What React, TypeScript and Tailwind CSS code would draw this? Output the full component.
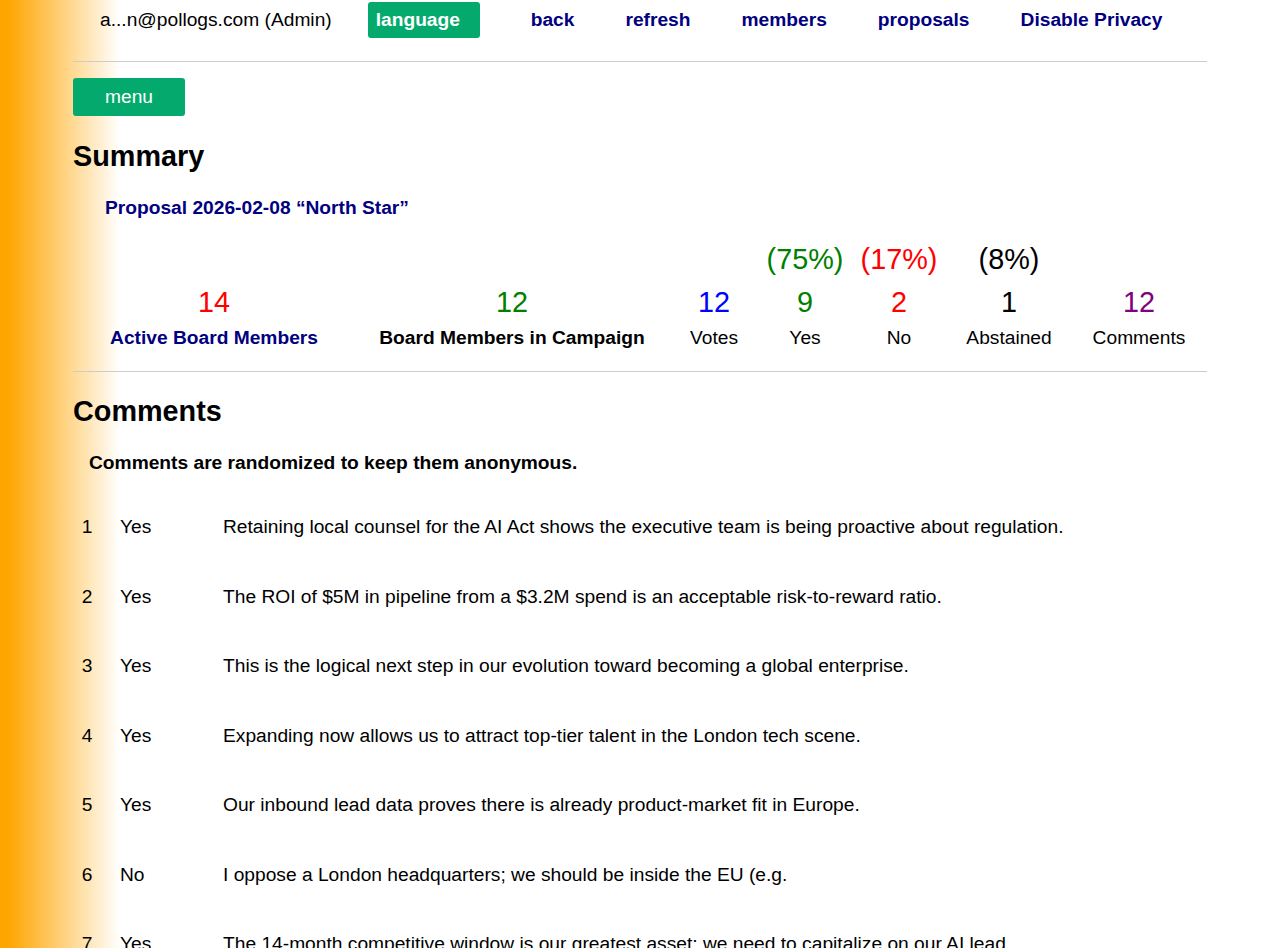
const LINKS = ["back", "refresh", "members", "proposals", "Disable Privacy"];

const STATS = [
  { pct: "", pctColor: "", value: "14", valueColor: "text-[#ff0000]", label: "Active Board Members", labelClass: "font-bold text-[#000080]" },
  { pct: "", pctColor: "", value: "12", valueColor: "text-[#008000]", label: "Board Members in Campaign", labelClass: "font-bold text-black" },
  { pct: "", pctColor: "", value: "12", valueColor: "text-[#0000ff]", label: "Votes", labelClass: "text-black" },
  { pct: "(75%)", pctColor: "text-[#008000]", value: "9", valueColor: "text-[#008000]", label: "Yes", labelClass: "text-black" },
  { pct: "(17%)", pctColor: "text-[#ff0000]", value: "2", valueColor: "text-[#ff0000]", label: "No", labelClass: "text-black" },
  { pct: "(8%)", pctColor: "text-black", value: "1", valueColor: "text-black", label: "Abstained", labelClass: "text-black" },
  { pct: "", pctColor: "", value: "12", valueColor: "text-[#800080]", label: "Comments", labelClass: "text-black" },
];

const COMMENTS = [
  { vote: "Yes", text: "Retaining local counsel for the AI Act shows the executive team is being proactive about regulation." },
  { vote: "Yes", text: "The ROI of $5M in pipeline from a $3.2M spend is an acceptable risk-to-reward ratio." },
  { vote: "Yes", text: "This is the logical next step in our evolution toward becoming a global enterprise." },
  { vote: "Yes", text: "Expanding now allows us to attract top-tier talent in the London tech scene." },
  { vote: "Yes", text: "Our inbound lead data proves there is already product-market fit in Europe." },
  { vote: "No", text: "I oppose a London headquarters; we should be inside the EU (e.g." },
  { vote: "Yes", text: "The 14-month competitive window is our greatest asset; we need to capitalize on our AI lead." },
  { vote: "Yes", text: "A phased rollout reduces the downside if the first market underperforms." },
];

export default function App() {
  return (
    <div className="min-h-screen bg-[linear-gradient(to_right,#FFA500_8px,#ffffff_120px)] font-['Liberation_Sans',Arial,sans-serif] text-[19.2px] text-black">
      <div className="ml-[73px] w-[1134px]">
        {/* Top bar */}
        <div className="flex items-center h-[38px] pt-[2px]">
          <span className="ml-[27px] leading-[22px]">a...n@pollogs.com (Admin)</span>
          <a className="ml-[36px] w-[112px] h-[36px] flex items-center pl-[8px] bg-[#04AA6D] text-white font-bold rounded-[3px]">
            language
          </a>
          {LINKS.map((l) => (
            <a key={l} className="ml-[51px] font-bold text-[#000080]">
              {l}
            </a>
          ))}
        </div>

        <div className="mt-[23px] h-px bg-[#cccccc]" />

        <button className="mt-[16px] w-[112px] h-[38px] bg-[#04AA6D] text-white rounded-[3px] flex items-center justify-center">
          menu
        </button>

        <h2 className="mt-[24px] text-[28.8px] font-bold leading-[33px]">Summary</h2>

        <div className="mt-[24px] ml-[32px] font-bold text-[#000080] leading-[22px]">
          Proposal 2026-02-08 “North Star”
        </div>

        {/* Stats */}
        <div className="mt-[24px] grid grid-cols-[282px_314px_90px_92px_96px_124px_136px] text-center">
          {STATS.map((s, i) => (
            <div key={i} className="flex flex-col items-center">
              <div className={`h-[33px] text-[28.8px] leading-[33px] ${s.pctColor}`}>{s.pct}</div>
              <div className={`mt-[10px] text-[28.8px] leading-[33px] ${s.valueColor}`}>{s.value}</div>
              <div className={`mt-[8px] leading-[22px] ${s.labelClass}`}>{s.label}</div>
            </div>
          ))}
        </div>

        <div className="mt-[22px] h-px bg-[#cccccc]" />

        <h2 className="mt-[23px] text-[28.8px] font-bold leading-[33px]">Comments</h2>

        <div className="mt-[24px] ml-[16px] font-bold leading-[22px]">
          Comments are randomized to keep them anonymous.
        </div>

        <div className="mt-[18px]">
          {COMMENTS.map((c, i) => (
            <div key={i} className="grid grid-cols-[28px_122px_1fr] py-[24px] leading-[21.5px]">
              <span className="text-center">{i + 1}</span>
              <span className="pl-[19px]">{c.vote}</span>
              <span>{c.text}</span>
            </div>
          ))}
        </div>
      </div>
    </div>
  );
}
